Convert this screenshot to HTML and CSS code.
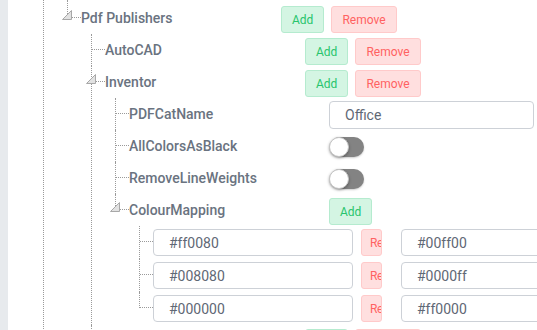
FILE: index.html
```html
<!DOCTYPE html>
<html lang="en">
<head>
    <meta charset="UTF-8">
    <meta name="viewport" content="width=device-width, initial-scale=1.0">
    <title>Pdf Publishers settings</title>
    <link rel="stylesheet" href="styles.css">
</head>
<body>
    <div class="side"></div>
    <div class="main">
        <ul class="tree root">
            <li class="node up">
                <ul class="tree">
                    <li class="node last open up">
                        <span class="twist"><svg width="10" height="10" viewBox="0 0 10 10"><polygon points="0.5,9.5 9.5,9.5 9.5,0.5" fill="#e2e2e2" stroke="#a8a8a8"/></svg></span>
                        <div class="row">
                            <span class="label">Pdf Publishers</span>
                            <button class="btn add">Add</button>
                            <button class="btn remove">Remove</button>
                        </div>
                        <ul class="tree">
                            <li class="node">
                                <div class="row">
                                    <span class="label">AutoCAD</span>
                                    <button class="btn add">Add</button>
                                    <button class="btn remove">Remove</button>
                                </div>
                            </li>
                            <li class="node open">
                                <span class="twist"><svg width="10" height="10" viewBox="0 0 10 10"><polygon points="0.5,9.5 9.5,9.5 9.5,0.5" fill="#e2e2e2" stroke="#a8a8a8"/></svg></span>
                                <div class="row">
                                    <span class="label">Inventor</span>
                                    <button class="btn add">Add</button>
                                    <button class="btn remove">Remove</button>
                                </div>
                                <ul class="tree">
                                    <li class="node">
                                        <div class="row">
                                            <span class="label">PDFCatName</span>
                                            <input class="field wide" type="text" value="Office">
                                        </div>
                                    </li>
                                    <li class="node">
                                        <div class="row">
                                            <span class="label">AllColorsAsBlack</span>
                                            <span class="switch"></span>
                                        </div>
                                    </li>
                                    <li class="node">
                                        <div class="row">
                                            <span class="label">RemoveLineWeights</span>
                                            <span class="switch"></span>
                                        </div>
                                    </li>
                                    <li class="node last open">
                                        <span class="twist"><svg width="10" height="10" viewBox="0 0 10 10"><polygon points="0.5,9.5 9.5,9.5 9.5,0.5" fill="#e2e2e2" stroke="#a8a8a8"/></svg></span>
                                        <div class="row">
                                            <span class="label">ColourMapping</span>
                                            <button class="btn add">Add</button>
                                        </div>
                                        <ul class="tree">
                                            <li class="node pair">
                                                <div class="row">
                                                    <input class="field hex" type="text" value="#ff0080">
                                                    <button class="btn remove cut">Re</button>
                                                    <input class="field hex" type="text" value="#00ff00">
                                                </div>
                                            </li>
                                            <li class="node pair">
                                                <div class="row">
                                                    <input class="field hex" type="text" value="#008080">
                                                    <button class="btn remove cut">Re</button>
                                                    <input class="field hex" type="text" value="#0000ff">
                                                </div>
                                            </li>
                                            <li class="node pair last">
                                                <div class="row">
                                                    <input class="field hex" type="text" value="#000000">
                                                    <button class="btn remove cut">Re</button>
                                                    <input class="field hex" type="text" value="#ff0000">
                                                </div>
                                            </li>
                                        </ul>
                                    </li>
                                </ul>
                            </li>
                            <li class="node">
                                <div class="row">
                                    <span class="label">Revit</span>
                                    <button class="btn add">Add</button>
                                    <button class="btn remove">Remove</button>
                                </div>
                            </li>
                        </ul>
                    </li>
                </ul>
            </li>
        </ul>
    </div>
</body>
</html>
```

FILE: styles.css
```css
html, body {
    margin: 0;
    height: 100%;
    overflow: hidden;
}

body {
    display: flex;
    font-family: Roboto, "Liberation Sans", sans-serif;
    color: #6a7380;
    background-color: #fff;
}

.side {
    flex: 0 0 8px;
    background-color: #e7eaed;
}

.main {
    flex: 1;
    padding-top: 2px;
    overflow: hidden;
}

/* tree lines */
.tree {
    list-style: none;
    margin: 0 0 0 10px;
    padding: 0;
}

.root {
    margin-left: 35px;
}

.node {
    position: relative;
    padding-left: 14px;
}

.node::before {
    content: "";
    position: absolute;
    left: 0;
    top: 0;
    bottom: 0;
    border-left: 1px dotted #9a9a9a;
}

.node.last::before {
    bottom: auto;
    height: 16px;
}

.node.up::before {
    top: -2px;
}

.node.last.up::before {
    height: 18px;
}

.node::after {
    content: "";
    position: absolute;
    left: 1px;
    top: 15px;
    width: 13px;
    border-top: 1px dotted #9a9a9a;
}

.root > .node::after {
    display: none;
}

.twist {
    position: absolute;
    left: -5px;
    top: 8px;
    width: 10px;
    height: 10px;
    z-index: 2;
}

.twist svg {
    display: block;
}

/* rows */
.row {
    display: flex;
    align-items: center;
    height: 32px;
    white-space: nowrap;
}

.pair > .row {
    height: 33px;
}

.label {
    flex: 0 0 200px;
    font-size: 14px;
    font-weight: 500;
    line-height: 32px;
}

.btn {
    flex: none;
    box-sizing: border-box;
    height: 27px;
    margin-top: 3px;
    padding: 0 10px;
    font-family: inherit;
    font-size: 12px;
    border-radius: 3px;
    border: 1px solid;
}

.btn + .btn {
    margin-left: 7px;
}

.add {
    background-color: #d4f5e3;
    border-color: #b5ebcf;
    color: #27c46c;
}

.remove {
    background-color: #ffdfdf;
    border-color: #ffcaca;
    color: #ff6262;
}

.cut {
    width: 21px;
    margin: 0 19px 0 8px;
    padding: 0 0 0 8px;
    overflow: hidden;
    text-align: left;
    letter-spacing: -0.5px;
}

.field {
    flex: none;
    box-sizing: border-box;
    height: 27px;
    padding: 0 0 0 15px;
    font-family: inherit;
    font-size: 14px;
    color: #5f6875;
    border: 1px solid #cdd1d7;
    border-radius: 4px;
    outline: none;
}

.wide {
    width: 205px;
    height: 28px;
    margin-top: 2px;
}

.hex {
    width: 200px;
}

.switch {
    position: relative;
    width: 35px;
    height: 20px;
    margin-top: 2px;
}

.switch::before {
    content: "";
    position: absolute;
    left: 1px;
    top: 0;
    width: 34px;
    height: 20px;
    border-radius: 10px;
    background-color: #838383;
    box-shadow: 0 1px 2px rgba(0, 0, 0, 0.2);
}

.switch::after {
    content: "";
    position: absolute;
    left: 0;
    top: 0;
    box-sizing: border-box;
    width: 20px;
    height: 20px;
    border-radius: 50%;
    background-color: #fff;
    border: 1px solid #c4c4c4;
    box-shadow: 0 1px 3px rgba(0, 0, 0, 0.35);
}
```
